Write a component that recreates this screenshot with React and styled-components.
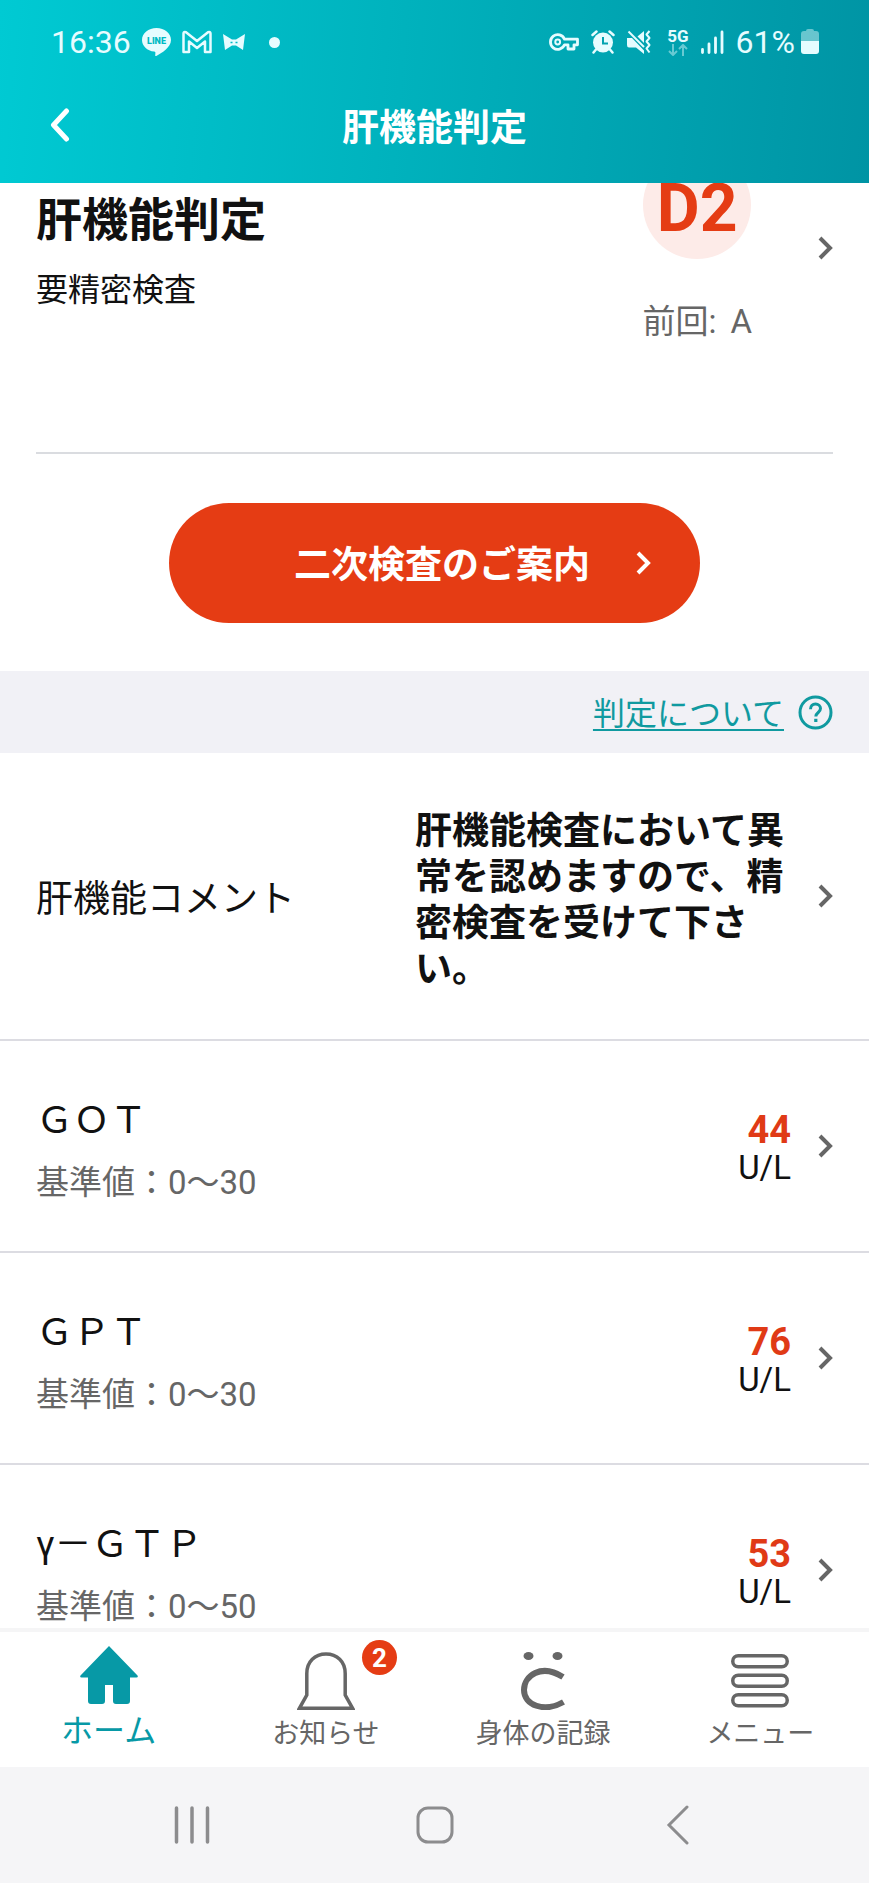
import React from 'react';

import styled, { createGlobalStyle } from 'styled-components';

const GlobalStyle = createGlobalStyle`
  * {
    box-sizing: border-box;
  }
  body {
    margin: 0;
    background: #fff;
    color: #111;
    font-family: Roboto, "Noto Sans CJK JP", sans-serif;
  }
  a {
    color: inherit;
    text-decoration: none;
  }
  button {
    margin: 0;
    padding: 0;
    border: 0;
    background: none;
    color: inherit;
    font: inherit;
    cursor: pointer;
  }
  svg {
    display: block;
    flex: none;
  }
`;

const Screen = styled.div`
  height: 100vh;
  display: flex;
  flex-direction: column;
  overflow: hidden;
`;

/* ---------- header ---------- */

const Header = styled.header`
  position: relative;
  z-index: 1;
  flex: none;
  background: linear-gradient(95deg, #00cad3 0%, #00b2bd 46%, #0094a4 100%);
  color: #fff;
`;

const StatusBar = styled.div`
  height: 84px;
  padding: 0 50px 0 51px;
  display: flex;
  align-items: center;
  justify-content: space-between;
  color: #e6fcff;
  font-size: 32px;
  line-height: 40px;
`;

const StatusGroup = styled.div`
  display: flex;
  align-items: center;
  gap: ${(props) => props.$gap}px;
`;

const MoreDot = styled.span`
  width: 11px;
  height: 11px;
  margin-left: 13px;
  border-radius: 50%;
  background: currentColor;
`;

const Network = styled.div`
  margin-left: 4px;
  display: flex;
  flex-direction: column;
  align-items: center;
  gap: 1px;
  font-size: 17px;
  font-weight: 700;
  line-height: 14px;
`;

const BatteryText = styled.span`
  display: flex;
  align-items: center;
  gap: 6px;
`;

const TitleBar = styled.div`
  height: 99px;
  padding: 0 48px 16px;
  display: grid;
  grid-template-columns: 48px 1fr 48px;
  align-items: center;
`;

const PageTitle = styled.h1`
  margin: 0;
  padding-top: 6px;
  text-align: center;
  font-size: 37px;
  line-height: 48px;
  font-weight: 700;
`;

/* ---------- content ---------- */

const Content = styled.main`
  flex: 1;
  min-height: 0;
  overflow: hidden;
`;

/* pulled up so that its top is scrolled under the header */
const Summary = styled.a`
  margin: -32px 36px 0;
  padding-bottom: 108px;
  border-bottom: 2px solid #dadce0;
  display: flex;
  align-items: center;
`;

const SummaryText = styled.div`
  flex: 1;
  padding-top: 8px;
`;

const SummaryTitle = styled.h2`
  margin: 0 0 20px;
  font-size: 46px;
  line-height: 56px;
  font-weight: 700;
`;

const SummaryState = styled.p`
  margin: 0;
  font-size: 32px;
  line-height: 44px;
`;

const GradeBox = styled.div`
  margin-right: 66px;
  display: flex;
  flex-direction: column;
  align-items: center;
  gap: 41px;
`;

const Grade = styled.div`
  width: 108px;
  height: 108px;
  padding-top: 8px;
  border-radius: 50%;
  background: #fdebe8;
  color: #e53c14;
  display: flex;
  align-items: center;
  justify-content: center;
  font-size: 66px;
  line-height: 72px;
  font-weight: 700;
`;

const Previous = styled.div`
  display: flex;
  gap: 14px;
  color: #666;
  font-size: 33px;
  line-height: 44px;
`;

const GuideWrap = styled.div`
  padding: 49px 36px 48px;
  display: flex;
  justify-content: center;
`;

const GuideButton = styled.button`
  width: 531px;
  height: 120px;
  padding-right: 49px;
  border-radius: 60px;
  background: #e53c14;
  color: #fff;
  display: flex;
  align-items: center;
  justify-content: flex-end;
  gap: 46px;
  font-size: 37px;
  line-height: 48px;
  font-weight: 700;
`;

const GuideLabel = styled.span`
  padding-top: 6px;
`;

const AboutBar = styled.div`
  height: 82px;
  padding: 0 36px;
  background: #f1f1f6;
  color: #109aa0;
  display: flex;
  align-items: center;
  justify-content: flex-end;
  gap: 14px;
`;

const AboutLink = styled.a`
  padding-top: 4px;
  font-size: 32px;
  line-height: 44px;
  text-decoration: underline;
  text-decoration-thickness: 2px;
  text-underline-offset: 4px;
`;

const List = styled.ul`
  margin: 0;
  padding: 0;
  list-style: none;
`;

const Row = styled.a`
  height: ${(props) => (props.$tall ? 288 : 212)}px;
  padding: 0 36px;
  border-bottom: 2px solid #dcdce2;
  display: flex;
  align-items: center;
  justify-content: space-between;
`;

const RowEnd = styled.div`
  display: flex;
  align-items: center;
  gap: ${(props) => props.$gap}px;
`;

const Name = styled.div`
  padding-top: 8px;
  font-size: 37px;
  line-height: 56px;
`;

const Range = styled.div`
  margin-top: 10px;
  color: #666;
  font-size: 33px;
  line-height: 48px;
`;

const Comment = styled.p`
  margin: 0;
  padding-top: 10px;
  width: 10em;
  font-size: 37px;
  line-height: 46px;
  font-weight: 700;
`;

const Result = styled.div`
  padding-top: 6px;
  text-align: right;
  font-size: 33px;
  line-height: 38px;
`;

const ResultValue = styled.div`
  color: #e03a16;
  font-size: 38px;
  font-weight: 700;
`;

/* ---------- bottom bars ---------- */

const TabBar = styled.nav`
  flex: none;
  height: 139px;
  border-top: 4px solid #f5f5f6;
  background: #fff;
  display: grid;
  grid-template-columns: repeat(4, 1fr);
`;

const Tab = styled.button`
  padding-bottom: 16px;
  display: flex;
  flex-direction: column;
  align-items: center;
  justify-content: flex-end;
  gap: 7px;
  color: ${(props) => (props.$active ? '#0799a6' : '#666')};
  font-size: ${(props) => (props.$active ? 32 : 27)}px;
  line-height: ${(props) => (props.$active ? 40 : 34)}px;
`;

const TabIcon = styled.span`
  position: relative;
`;

const Badge = styled.span`
  position: absolute;
  top: -12px;
  left: 65px;
  width: 35px;
  height: 35px;
  border-radius: 50%;
  background: #e53c14;
  color: #fff;
  font-size: 26px;
  line-height: 37px;
  font-weight: 700;
  text-align: center;
`;

const SystemNav = styled.nav`
  flex: none;
  height: 116px;
  padding: 0 70px;
  background: #f5f5f7;
  display: grid;
  grid-template-columns: repeat(3, 1fr);
`;

const SystemButton = styled.button`
  display: flex;
  align-items: center;
  justify-content: center;
`;

/* ---------- icons ---------- */

const Chevron = ({ color = '#666' }) => (
  <svg width="15" height="24" viewBox="0 0 15 24" fill="none" aria-hidden="true">
    <path d="M2 2l10 10L2 22" stroke={color} strokeWidth="4" />
  </svg>
);

const BackIcon = () => (
  <svg width="24" height="36" viewBox="0 0 24 36" fill="none" aria-hidden="true">
    <path d="M18.500 3L5.500 17l13 14" stroke="#fff" strokeWidth="5" strokeLinecap="round" strokeLinejoin="round" />
  </svg>
);

const LineIcon = () => (
  <svg width="29" height="29" viewBox="0 0 29 29" aria-hidden="true">
    <path
      fill="currentColor"
      d="M14.500 0C6.500 0 0 5.300 0 11.900c0 5.900 5.200 10.800 12.200 11.700.9.200 1.300.6 1.200 1.500l-.2 2.300c0 .7.500.9 1.100.5C19.500 25.100 29 19.200 29 11.900 29 5.300 22.500 0 14.500 0z"
    />
    <text x="14.500" y="16" textAnchor="middle" fontFamily="Roboto, sans-serif" fontSize="9" fontWeight="900" fill="#00bac4">
      LINE
    </text>
  </svg>
);

const GmailIcon = () => (
  <svg width="30" height="24" viewBox="0 0 30 24" fill="none" aria-hidden="true">
    <path
      d="M1.500 22V3.500Q1.500 1.500 4 2.200L15 11 26 2.200q2.500-.7 2.500 1.300V22H23V11.500L15 18 7 11.500V22z"
      stroke="currentColor"
      strokeWidth="2.500"
      strokeLinejoin="round"
    />
  </svg>
);

const BowIcon = () => (
  <svg width="22" height="17" viewBox="0 0 22 17" aria-hidden="true">
    <path fill="currentColor" d="M0 0l9 5.500h4L22 0l-2 16-7-4.500H9L2 16z" />
    <path d="M7.500 8.500h2M12.500 8.500h2" stroke="#00bac4" strokeWidth="1.500" />
  </svg>
);

const KeyIcon = () => (
  <svg width="30" height="18" viewBox="0 0 30 18" fill="none" aria-hidden="true">
    <path
      d="M15.500 6.200A7.300 7.300 0 1 0 15.500 11.800H19V16h6v-4.200h3.500V6.200z"
      stroke="currentColor"
      strokeWidth="2.800"
      strokeLinejoin="round"
    />
    <circle cx="8.700" cy="9" r="2.400" stroke="currentColor" strokeWidth="2" />
  </svg>
);

const AlarmIcon = () => (
  <svg width="24" height="24" viewBox="0 0 24 24" fill="none" aria-hidden="true">
    <circle cx="12" cy="12.500" r="10" fill="currentColor" />
    <path d="M1.500 5L5.500 1.500M22.500 5L18.500 1.500M5 19.500l-2.500 3M19 19.500l2.500 3" stroke="currentColor" strokeWidth="2.500" strokeLinecap="round" />
    <path d="M12 7v6.500h5" stroke="#02a2b0" strokeWidth="2" />
  </svg>
);

const MuteIcon = () => (
  <svg width="24" height="24" viewBox="0 0 24 24" fill="none" aria-hidden="true">
    <path fill="currentColor" d="M0 8h5l12 12.500V24l-8-6.500H2Q0 17.500 0 15z" />
    <path fill="currentColor" d="M10.500 6.500L17 1v12z" />
    <path d="M1.500 1.500L17 17" stroke="currentColor" strokeWidth="2" />
    <path d="M22.500 1l-3 3.500 3 3.500-3 3.500 3 3.500-3 3.500 3 4" stroke="currentColor" strokeWidth="2" strokeLinejoin="round" />
  </svg>
);

const DataArrows = () => (
  <svg width="20" height="12" viewBox="0 0 20 12" fill="none" opacity="0.45" aria-hidden="true">
    <path d="M5 0v11M1 7l4 4 4-4M15 12V1M11 5l4-4 4 4" stroke="currentColor" strokeWidth="2" />
  </svg>
);

const SignalIcon = () => (
  <svg width="23" height="24" viewBox="0 0 23 24" aria-hidden="true">
    <path d="M1.500 19.500v3M8 14v8.500M14.500 8v14.500M21 2v20.500" stroke="currentColor" strokeWidth="2.800" strokeLinecap="round" />
  </svg>
);

const BatteryIcon = () => (
  <svg width="18" height="26" viewBox="0 0 18 26" fill="currentColor" aria-hidden="true">
    <path opacity="0.45" d="M5 2q0-2 2-2h4q2 0 2 2h2q3 0 3 3v7H0V5q0-3 3-3z" />
    <path d="M0 12h18v10q0 3-3 3H3q-3 0-3-3z" />
  </svg>
);

const HelpIcon = () => (
  <svg width="35" height="35" viewBox="0 0 35 35" fill="none" aria-hidden="true">
    <circle cx="17.500" cy="17.500" r="15.500" stroke="currentColor" strokeWidth="3" />
    <path
      d="M12.500 14.200c0-3.400 2.200-5.200 5-5.200s5 1.800 5 4.600c0 3.900-4.700 3.900-4.700 8"
      stroke="currentColor"
      strokeWidth="3"
    />
    <path d="M16.200 23.800h3.200V27h-3.200z" fill="currentColor" />
  </svg>
);

const HomeIcon = () => (
  <svg width="58" height="58" viewBox="0 0 58 58" aria-hidden="true">
    <path
      fill="currentColor"
      d="M29 0L57.500 29.500q1 2-1 2H50V55q0 3-3 3H36q-3 0-3-3V39h-8v16q0 3-3 3H11q-3 0-3-3V31.500H1.500q-2 0-1-2z"
    />
  </svg>
);

const BellIcon = () => (
  <svg width="58" height="58" viewBox="0 0 58 58" fill="none" aria-hidden="true">
    <path
      d="M2.500 56.200L9.800 43V21.500C9.800 9.500 18 2 29 2s19.200 7.500 19.200 19.500V43l7.300 13.200z"
      stroke="currentColor"
      strokeWidth="3.500"
    />
  </svg>
);

const BodyIcon = () => (
  <svg width="58" height="58" viewBox="0 0 58 58" fill="none" aria-hidden="true">
    <ellipse cx="14.500" cy="4" rx="5" ry="4" fill="currentColor" />
    <ellipse cx="43.500" cy="4" rx="5" ry="4" fill="currentColor" />
    <path d="M49 25C27 11 10 24 10 38c0 15 20 23 39.500 12" stroke="currentColor" strokeWidth="6" />
  </svg>
);

const MenuIcon = () => (
  <svg width="58" height="58" viewBox="0 0 58 58" fill="none" stroke="currentColor" strokeWidth="3.500" aria-hidden="true">
    <rect x="1.750" y="3.750" width="54.500" height="11" rx="5.500" />
    <rect x="1.750" y="23.250" width="54.500" height="11" rx="5.500" />
    <rect x="1.750" y="42.750" width="54.500" height="11" rx="5.500" />
  </svg>
);

const RecentsIcon = () => (
  <svg width="36" height="40" viewBox="0 0 36 40" aria-hidden="true">
    <path d="M2.500 3v34M18 3v34M33.500 3v34" stroke="#8c8c8e" strokeWidth="3.500" strokeLinecap="round" />
  </svg>
);

const SystemHomeIcon = () => (
  <svg width="40" height="40" viewBox="0 0 40 40" fill="none" aria-hidden="true">
    <rect x="3" y="3" width="34" height="34" rx="10" stroke="#8c8c8e" strokeWidth="3" />
  </svg>
);

const SystemBackIcon = () => (
  <svg width="24" height="40" viewBox="0 0 24 40" fill="none" aria-hidden="true">
    <path d="M21 2L3 20l18 18" stroke="#8c8c8e" strokeWidth="3" strokeLinecap="round" />
  </svg>
);

/* ---------- data ---------- */

const results = [
  { name: 'ＧＯＴ', range: '0～30', value: 44, unit: 'U/L' },
  { name: 'ＧＰＴ', range: '0～30', value: 76, unit: 'U/L' },
  { name: 'γ－ＧＴＰ', range: '0～50', value: 53, unit: 'U/L' },
];

const tabs = [
  { label: 'ホーム', icon: <HomeIcon />, active: true },
  { label: 'お知らせ', icon: <BellIcon />, badge: 2 },
  { label: '身体の記録', icon: <BodyIcon /> },
  { label: 'メニュー', icon: <MenuIcon /> },
];

function ResultRow({ name, range, value, unit }) {
  return (
    <li>
      <Row href="#">
        <div>
          <Name>{name}</Name>
          <Range>基準値：{range}</Range>
        </div>
        <RowEnd $gap={27}>
          <Result>
            <ResultValue>{value}</ResultValue>
            {unit}
          </Result>
          <Chevron />
        </RowEnd>
      </Row>
    </li>
  );
}

function App() {
  return (
    <Screen lang="ja">
      <GlobalStyle />
      <Header>
        <StatusBar>
          <StatusGroup $gap={11}>
            <span>16:36</span>
            <LineIcon />
            <GmailIcon />
            <BowIcon />
            <MoreDot />
          </StatusGroup>
          <StatusGroup $gap={12}>
            <KeyIcon />
            <AlarmIcon />
            <MuteIcon />
            <Network>
              5G
              <DataArrows />
            </Network>
            <SignalIcon />
            <BatteryText>
              61%
              <BatteryIcon />
            </BatteryText>
          </StatusGroup>
        </StatusBar>
        <TitleBar>
          <button type="button" aria-label="戻る">
            <BackIcon />
          </button>
          <PageTitle>肝機能判定</PageTitle>
        </TitleBar>
      </Header>

      <Content>
        <Summary href="#">
          <SummaryText>
            <SummaryTitle>肝機能判定</SummaryTitle>
            <SummaryState>要精密検査</SummaryState>
          </SummaryText>
          <GradeBox>
            <Grade>D2</Grade>
            <Previous>
              <span>前回:</span>
              <span>A</span>
            </Previous>
          </GradeBox>
          <Chevron />
        </Summary>

        <GuideWrap>
          <GuideButton type="button">
            <GuideLabel>二次検査のご案内</GuideLabel>
            <Chevron color="#fff" />
          </GuideButton>
        </GuideWrap>

        <AboutBar>
          <AboutLink href="#">判定について</AboutLink>
          <HelpIcon />
        </AboutBar>

        <List>
          <li>
            <Row href="#" $tall>
              <Name>肝機能コメント</Name>
              <RowEnd $gap={33}>
                <Comment>肝機能検査において異常を認めますので、精密検査を受けて下さい。</Comment>
                <Chevron />
              </RowEnd>
            </Row>
          </li>
          {results.map((item) => (
            <ResultRow key={item.name} {...item} />
          ))}
        </List>
      </Content>

      <TabBar>
        {tabs.map((tab) => (
          <Tab key={tab.label} type="button" $active={tab.active}>
            <TabIcon>
              {tab.icon}
              {tab.badge && <Badge>{tab.badge}</Badge>}
            </TabIcon>
            {tab.label}
          </Tab>
        ))}
      </TabBar>

      <SystemNav>
        <SystemButton type="button" aria-label="履歴">
          <RecentsIcon />
        </SystemButton>
        <SystemButton type="button" aria-label="ホーム画面">
          <SystemHomeIcon />
        </SystemButton>
        <SystemButton type="button" aria-label="前の画面">
          <SystemBackIcon />
        </SystemButton>
      </SystemNav>
    </Screen>
  );
}

export default App;
